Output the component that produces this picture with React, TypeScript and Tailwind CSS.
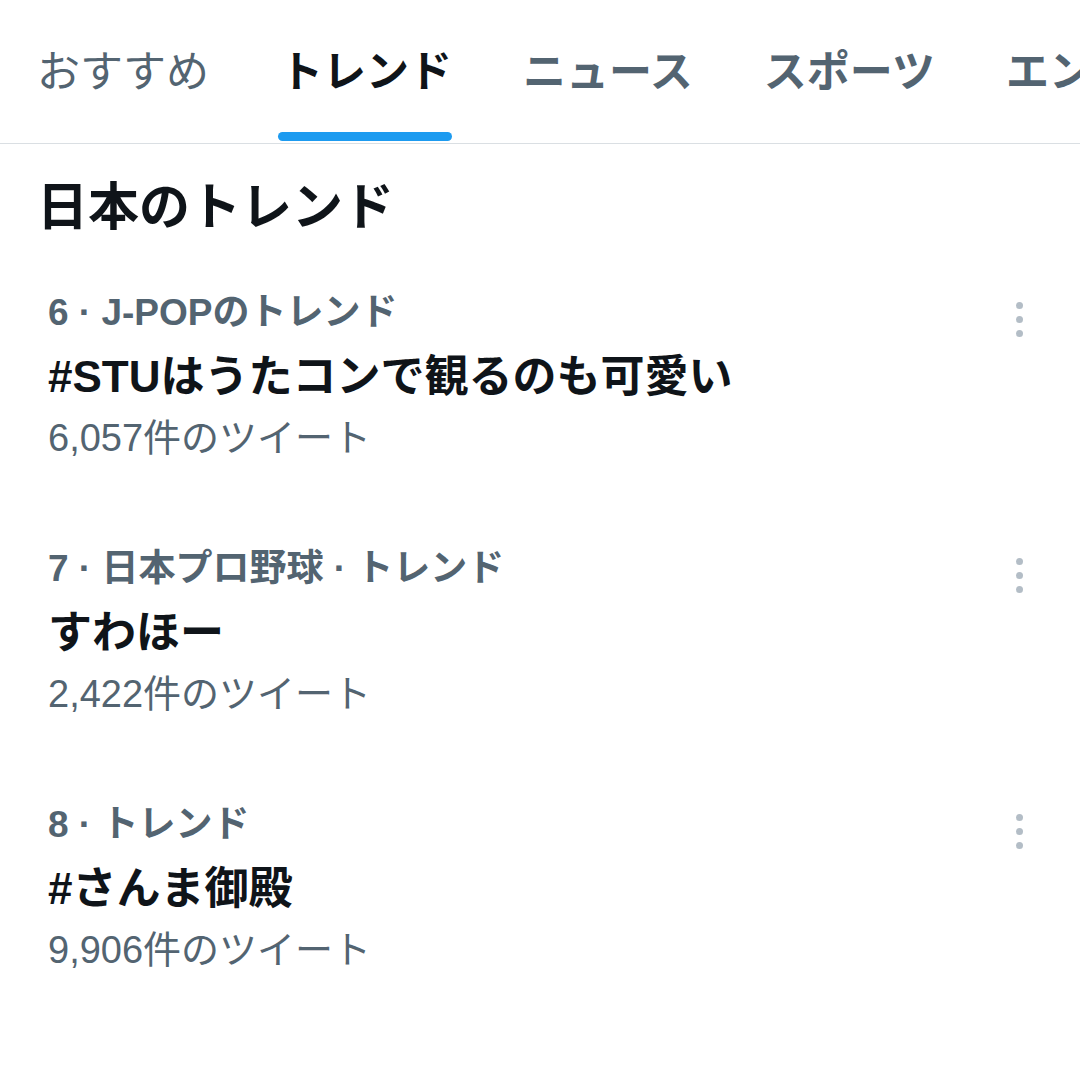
const tabs = [
  { label: 'おすすめ', state: 'plain' },
  { label: 'トレンド', state: 'active' },
  { label: 'ニュース', state: 'bold' },
  { label: 'スポーツ', state: 'bold' },
  { label: 'エンタメ', state: 'bold' },
];

const trends = [
  { meta: '6 · J-POPのトレンド', title: '#STUはうたコンで観るのも可愛い', count: '6,057件のツイート' },
  { meta: '7 · 日本プロ野球 · トレンド', title: 'すわほー', count: '2,422件のツイート' },
  { meta: '8 · トレンド', title: '#さんま御殿', count: '9,906件のツイート' },
];

function MoreDots() {
  return (
    <div className="flex flex-col gap-[7px] mt-[15px] mr-[57px] shrink-0">
      <span className="w-[7px] h-[7px] rounded-full bg-[#b3bdc6]" />
      <span className="w-[7px] h-[7px] rounded-full bg-[#b3bdc6]" />
      <span className="w-[7px] h-[7px] rounded-full bg-[#b3bdc6]" />
    </div>
  );
}

export default function App() {
  return (
    <div className="w-[1080px] h-[1065px] overflow-hidden bg-white font-['Liberation_Sans','Noto_Sans_CJK_JP',sans-serif]">
      {/* タブ */}
      <nav className="h-[144px] border-b border-[#dadfe3] flex items-center gap-[71px] pl-[37px] overflow-hidden whitespace-nowrap">
        {tabs.map((t) => (
          <div key={t.label} className="relative h-full flex items-center shrink-0">
            <span
              className={
                t.state === 'active'
                  ? 'text-[43px] leading-[50px] font-bold text-[#0f1419]'
                  : t.state === 'bold'
                  ? 'text-[43px] leading-[50px] font-bold text-[#536471]'
                  : 'text-[43px] leading-[50px] font-normal text-[#536471]'
              }
            >
              {t.label}
            </span>
            {t.state === 'active' && (
              <span className="absolute left-[-2px] right-0 bottom-[2px] h-[9px] rounded-full bg-[#1d9bf0]" />
            )}
          </div>
        ))}
      </nav>

      <h2 className="mt-[34px] pl-[37px] text-[51px] leading-[60px] font-bold text-[#0f1419]">日本のトレンド</h2>

      <div className="mt-[8px]">
        {trends.map((t) => (
          <div key={t.title} className="flex justify-between items-start py-[41px] pl-[48px]">
            <div className="flex flex-col whitespace-nowrap">
              <span className="text-[37px] leading-[52px] font-bold text-[#536471]">{t.meta}</span>
              <span className="text-[44px] leading-[76px] font-bold text-[#0f1419]">{t.title}</span>
              <span className="text-[38px] leading-[46px] text-[#536471]">{t.count}</span>
            </div>
            <MoreDots />
          </div>
        ))}
      </div>
    </div>
  );
}
